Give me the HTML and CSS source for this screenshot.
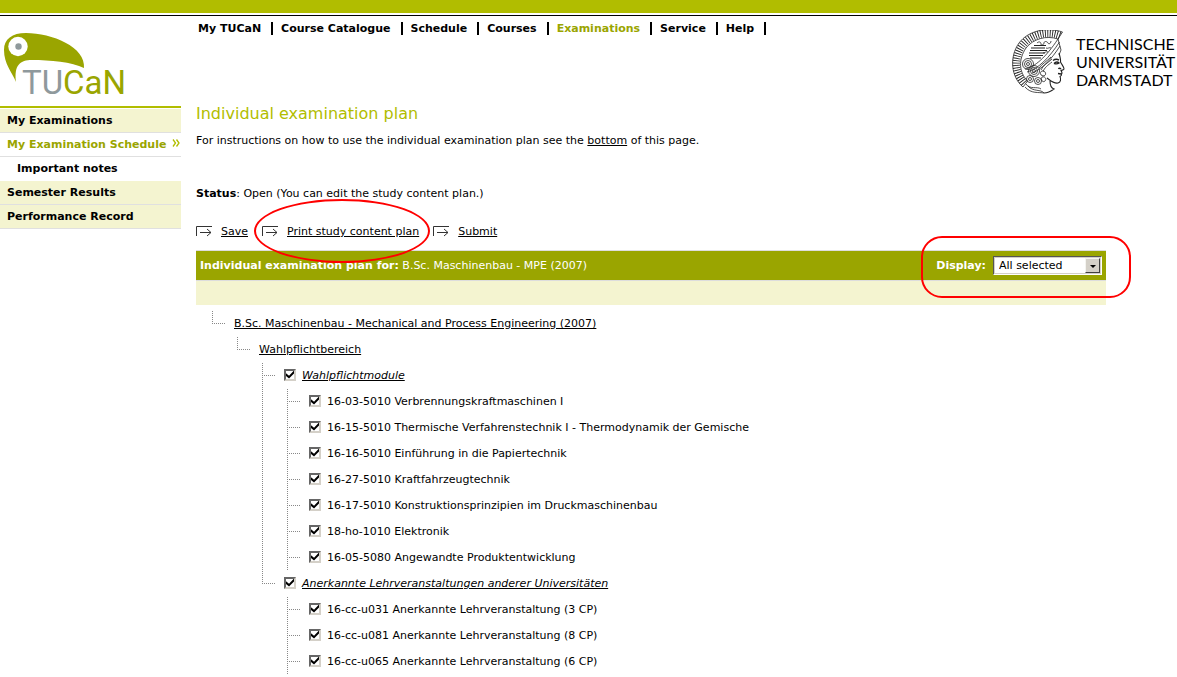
FILE: index.html
```
<!DOCTYPE html>
<html lang="en">
<head>
    <meta charset="utf-8">
    <title>TUCaN - Individual examination plan</title>
    <meta name="viewport" content="width=device-width, initial-scale=1">
    <link rel="stylesheet" href="styles.css">
</head>
<body>
    <div class="top-bar"></div>

    <header class="page-header">
        <a href="#" class="logo" aria-label="TUCaN">
            <svg width="140" height="76" viewBox="0 0 140 76">
                <path fill="#9aa500" d="M16 53 C12 43 4 35 4 21 C4 10 12 4 26 4 C52 4 86 18 84 39 C72 33 50 31 32 31 C20 31 14 36 16 53 Z"/>
                <circle cx="18" cy="17.500" r="9.700" fill="#fff"/>
                <circle cx="18.500" cy="17.500" r="3.200" fill="#8f999c"/>
                <text x="22" y="65" class="logo-text"><tspan fill="#8f999c">TU</tspan><tspan fill="#9aa500">CaN</tspan></text>
            </svg>
        </a>
        <nav class="main-nav">
            <a href="#">My TUCaN</a>
            <a href="#">Course Catalogue</a>
            <a href="#">Schedule</a>
            <a href="#">Courses</a>
            <a href="#" class="active">Examinations</a>
            <a href="#">Service</a>
            <a href="#">Help</a>
        </nav>
        <div class="university">
            <svg width="56" height="66" viewBox="4 4 56 66" fill="none" stroke="#222" stroke-width=".8" aria-hidden="true">
                <!-- crest -->
                <path d="M52 9.500 C38 4 22 9 14 20 C5 33 7 48 17 58" stroke-width="7.500" stroke-dasharray=".9 1.500"/>
                <path d="M54.500 6 C38 .5 20 5 11 17 C1 31 3 51 15 61 L19.500 55"/>
                <path d="M54.500 6 L50 13 C38 9 25 13 18 22 C10 34 11 46 19.500 55"/>
                <!-- helmet bands -->
                <path d="M17 43 C27 41 38 31 50 13 M19 46 C30 43 41 32 51.500 16 M24 47 C34 43 43 34 52 20 M50 13 L53 24 L51 29"/>
                <path d="M23 22 H37 M22 24.500 H39 M21 27 H37 M21 29.500 H35 M22 32 H33 M26 19.500 H38" stroke-width="1.100"/>
                <path d="M29 17 c2-2 4-1 4 1 s3 1 3-1 s3-2 4 0 s3 0 3-2 M35 27 c2 0 3-2 5-1 M38 22 c2 1 3-1 5 0"/>
                <!-- curls -->
                <circle cx="20" cy="38" r="1.500"/><circle cx="20" cy="38" r="3.500"/><circle cx="20" cy="38" r="5.500"/>
                <circle cx="26" cy="45" r="1.500"/><circle cx="26" cy="45" r="3.500"/><circle cx="26" cy="45" r="5.500"/>
                <circle cx="22" cy="53" r="1.500"/><circle cx="22" cy="53" r="3.500"/>
                <circle cx="30" cy="55" r="1.500"/><circle cx="30" cy="55" r="3.500"/>
                <path d="M31 42 c3-4 8-7 12-11 M33 44 c2-5 7-7 11-11 M35 46 c1-4 5-7 9-10 M33 49 c-2-3 2-6 4-3 s-1 5-4 3 M34 51 c-2 3 1 6 3 4 s0-5-3-4"/>
                <path d="M18 58 C22 64 29 60 33 63 M20 60 C25 66 33 63 36 67 M17 61 C23 68 31 66 36 67"/>
                <!-- face and neck -->
                <path d="M51 27 C52 31 53 34 52.500 36 C54 39 56 41 56 43 C56 44 54 44 53 44.500 C54 46 54.500 47 53.500 48 C54 49.500 53 50 52 50.500 C53 53 53 56 50 57 C46 58 43 55 39 52 M42 55 C42 59 43 62 46 63 C42 66 39 67 36 67" stroke-width="1.100"/>
                <path d="M45 34.500 C47 33 49 33 51 34 M46 37.500 C48 35.500 50 36 51 37 C49 38.500 48 38 46 37.500 M50.500 43 C51 42 52 42 53 43 M50 47.500 L53 48" stroke-width="1.400"/>
            </svg>
            <p>TECHNISCHE<br>UNIVERSITÄT<br>DARMSTADT</p>
        </div>
    </header>

    <div class="columns">
        <nav class="side-nav">
            <a href="#">My Examinations</a>
            <a href="#" class="current">My Examination Schedule<svg class="chevrons" width="8" height="8" viewBox="0 0 8 8"><path d="M1 .5l2.500 3.500L1 7.500M4.500 .5L7 4 4.500 7.500" fill="none" stroke="#b1bd00" stroke-width="1.300"/></svg></a>
            <a href="#" class="sub">Important notes</a>
            <a href="#">Semester Results</a>
            <a href="#">Performance Record</a>
        </nav>

        <main>
            <h1>Individual examination plan</h1>
            <p class="intro">For instructions on how to use the individual examination plan see the <a href="#">bottom</a> of this page.</p>
            <p class="status"><strong>Status</strong>: Open (You can edit the study content plan.)</p>

            <div class="actions">
                <span class="action"><svg width="16" height="13" viewBox="0 0 16 13"><path d="M.5 10V.5H16M4 6.500h11M11 3l4 3.500-4 3.500" fill="none" stroke="#333"/></svg><a href="#">Save</a></span>
                <span class="action circled"><svg width="16" height="13" viewBox="0 0 16 13"><path d="M.5 10V.5H16M4 6.500h11M11 3l4 3.500-4 3.500" fill="none" stroke="#333"/></svg><a href="#">Print study content plan</a></span>
                <span class="action"><svg width="16" height="13" viewBox="0 0 16 13"><path d="M.5 10V.5H16M4 6.500h11M11 3l4 3.500-4 3.500" fill="none" stroke="#333"/></svg><a href="#">Submit</a></span>
            </div>

            <div class="plan-header">
                <div><strong>Individual examination plan for:</strong> B.Sc. Maschinenbau - MPE (2007)</div>
                <div class="display">
                    <label for="display">Display:</label>
                    <div class="select-box">
                        <select id="display">
                            <option>All selected</option>
                        </select>
                        <span class="arrow" aria-hidden="true"></span>
                    </div>
                </div>
            </div>
            <div class="plan-subheader"></div>

            <ul class="tree">
                <li class="last">
                    <div class="node"><a href="#">B.Sc. Maschinenbau - Mechanical and Process Engineering (2007)</a></div>
                    <ul>
                        <li class="last">
                            <div class="node"><a href="#">Wahlpflichtbereich</a></div>
                            <ul>
                                <li>
                                    <div class="node group"><input type="checkbox" id="m1" checked><label for="m1"><a href="#">Wahlpflichtmodule</a></label></div>
                                    <ul>
                                        <li><div class="node"><input type="checkbox" id="c1" checked><label for="c1">16-03-5010 Verbrennungskraftmaschinen I</label></div></li>
                                        <li><div class="node"><input type="checkbox" id="c2" checked><label for="c2">16-15-5010 Thermische Verfahrenstechnik I - Thermodynamik der Gemische</label></div></li>
                                        <li><div class="node"><input type="checkbox" id="c3" checked><label for="c3">16-16-5010 Einführung in die Papiertechnik</label></div></li>
                                        <li><div class="node"><input type="checkbox" id="c4" checked><label for="c4">16-27-5010 Kraftfahrzeugtechnik</label></div></li>
                                        <li><div class="node"><input type="checkbox" id="c5" checked><label for="c5">16-17-5010 Konstruktionsprinzipien im Druckmaschinenbau</label></div></li>
                                        <li><div class="node"><input type="checkbox" id="c6" checked><label for="c6">18-ho-1010 Elektronik</label></div></li>
                                        <li><div class="node"><input type="checkbox" id="c7" checked><label for="c7">16-05-5080 Angewandte Produktentwicklung</label></div></li>
                                    </ul>
                                </li>
                                <li class="last">
                                    <div class="node group"><input type="checkbox" id="m2" checked><label for="m2"><a href="#">Anerkannte Lehrveranstaltungen anderer Universitäten</a></label></div>
                                    <ul>
                                        <li><div class="node"><input type="checkbox" id="c8" checked><label for="c8">16-cc-u031 Anerkannte Lehrveranstaltung (3 CP)</label></div></li>
                                        <li><div class="node"><input type="checkbox" id="c9" checked><label for="c9">16-cc-u081 Anerkannte Lehrveranstaltung (8 CP)</label></div></li>
                                        <li><div class="node"><input type="checkbox" id="c10" checked><label for="c10">16-cc-u065 Anerkannte Lehrveranstaltung (6 CP)</label></div></li>
                                    </ul>
                                </li>
                            </ul>
                        </li>
                    </ul>
                </li>
            </ul>
        </main>
    </div>
</body>
</html>
```
FILE: styles.css
```
body {
    margin: 0;
    background: #fff;
    color: #000;
    font-family: Verdana, "DejaVu Sans", sans-serif;
    font-size: 11px;
    line-height: 14px;
}
a {
    color: inherit;
}
.top-bar {
    height: 13px;
    background: #b1bd00;
    border-bottom: 2px solid #fff;
}
.page-header {
    display: flex;
    align-items: flex-start;
    height: 90px;
    border-top: 1px solid #000;
}
.logo {
    width: 190px;
    padding-top: 13px;
}
.logo svg {
    display: block;
}
.logo-text {
    font-family: Roboto, sans-serif;
    font-size: 33px;
}
.main-nav {
    display: flex;
    flex: 1;
    padding-top: 6px;
    font-weight: bold;
}
.main-nav a {
    height: 13px;
    line-height: 14px;
    padding: 0 10px 0 8px;
    border-right: 2px solid #000;
    text-decoration: none;
    white-space: nowrap;
}
.main-nav .active {
    color: #9aa500;
}
.university {
    display: flex;
    gap: 8px;
    padding-top: 14px;
}
.university p {
    width: 101px;
    margin: 5px 0 0;
    font-family: Lato, sans-serif;
    font-size: 16px;
    line-height: 18px;
}
.columns {
    display: flex;
}
.side-nav {
    width: 181px;
    margin-right: 15px;
    padding-top: 1px;
    border-top: 2px solid #b1bd00;
    align-self: flex-start;
}
.side-nav a {
    display: flex;
    align-items: center;
    height: 23px;
    padding-left: 7px;
    background: #f4f4d0;
    border-bottom: 1px solid #e0e0e0;
    font-weight: bold;
    text-decoration: none;
    white-space: nowrap;
}
.side-nav .current {
    background: #fff;
    color: #9aa500;
}
.side-nav .sub {
    padding-left: 17px;
    background: #fff;
    border-color: #fff;
}
.chevrons {
    margin: 0 1px 3px auto;
}
main {
    flex: 1;
    margin-right: 71px;
}
h1 {
    margin: 0;
    color: #b1bd00;
    font-size: 16px;
    font-weight: normal;
    line-height: 16px;
}
.intro {
    margin: 12px 0 39px;
}
.status {
    margin: 0 0 24px;
}
.actions {
    display: flex;
    gap: 14px;
    margin-bottom: 11px;
}
.action {
    display: flex;
    align-items: center;
    gap: 9px;
    position: relative;
}
/* red markings over the page */
.circled::after,
.display::after {
    content: "";
    position: absolute;
    border: 2px solid #f00;
    pointer-events: none;
}
.circled::after {
    top: -26px;
    left: -8px;
    right: -11px;
    height: 60px;
    border-radius: 50%;
}
.display::after {
    top: -20px;
    left: -15px;
    right: -29px;
    height: 58px;
    border-radius: 21px;
}
.plan-header {
    display: flex;
    align-items: center;
    justify-content: space-between;
    height: 29px;
    padding: 0 4px;
    background: #9aa500;
    border-top: 1px solid #ddd;
    border-bottom: 1px solid #ddd;
    color: #fff;
}
.display {
    display: flex;
    align-items: center;
    gap: 7px;
    position: relative;
    font-weight: bold;
}
.select-box {
    position: relative;
    width: 109px;
    height: 19px;
}
select {
    appearance: none;
    display: block;
    box-sizing: border-box;
    width: 100%;
    height: 100%;
    padding: 0 18px 0 4px;
    background: #fff;
    border: 2px solid;
    border-color: #555 #fff #fff #555;
    border-radius: 0;
    outline: 1px solid #d4d0c8;
    outline-offset: -2px;
    color: #000;
    font: 11px Verdana, "DejaVu Sans", sans-serif;
}
.arrow {
    position: absolute;
    top: 2px;
    right: 2px;
    bottom: 2px;
    width: 13px;
    background: #d4d0c8;
    border: 1px solid;
    border-color: #f4f4f0 #404040 #404040 #f4f4f0;
    pointer-events: none;
}
.arrow::before {
    content: "";
    position: absolute;
    top: 6px;
    left: 4px;
    border: 3px solid transparent;
    border-top-color: #000;
    border-bottom: 0;
}
.plan-subheader {
    height: 24px;
    background: #f4f4d0;
}
.tree, .tree ul {
    margin: 0;
    padding: 0;
    list-style: none;
}
.tree {
    padding: 6px 0 0 16px;
}
.tree ul {
    padding-left: 25px;
}
.tree li {
    position: relative;
}
/* dotted branch lines */
.tree li::before {
    content: "";
    position: absolute;
    top: 0;
    left: 0;
    width: 1px;
    height: 100%;
    background: repeating-linear-gradient(#888 0 1px, #fff 1px 2px);
}
.tree li.last::before {
    height: 13px;
}
.node {
    display: flex;
    align-items: center;
    position: relative;
    height: 26px;
    padding-left: 22px;
}
.node::before {
    content: "";
    position: absolute;
    top: 12px;
    left: 0;
    width: 13px;
    height: 1px;
    background: repeating-linear-gradient(90deg, #888 0 1px, #fff 1px 2px);
}
.group {
    font-style: italic;
}
.node input {
    appearance: none;
    box-sizing: border-box;
    position: relative;
    width: 12px;
    height: 12px;
    margin: 0 6px 3px 0;
    background: #fff;
    border: 2px solid;
    border-color: #666 #d4d0c8 #d4d0c8 #666;
}
.node input:checked::before {
    content: "";
    position: absolute;
    top: 0;
    left: 0;
    width: 8px;
    height: 8px;
    background: #000;
    clip-path: polygon(0 35%, 38% 65%, 100% 0, 100% 38%, 38% 100%, 0 70%);
}
```
